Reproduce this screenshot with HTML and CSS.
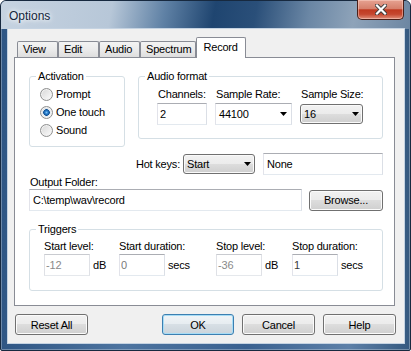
FILE: index.html
```html
<!DOCTYPE html>
<html lang="en">
<head>
    <meta charset="UTF-8">
    <title>Options</title>

    <link rel="stylesheet" href="styles.css">
</head>
<body>

    <div class="window">
        <div class="titlebar">
            <span class="title">Options</span>
            <div class="close">
                <svg width="12" height="11" viewBox="0 0 12 11">
                    <path d="M2 1.5L10 9.5M10 1.5L2 9.5" stroke="#3b3b3b" stroke-width="4" stroke-linecap="square"/>
                    <path d="M2 1.5L10 9.5M10 1.5L2 9.5" stroke="#fff" stroke-width="2.2" stroke-linecap="square"/>
                </svg>
            </div>
        </div>

        <div class="client">
            <div class="tabs">
                <div class="tab">View</div>
                <div class="tab">Edit</div>
                <div class="tab">Audio</div>
                <div class="tab">Spectrum</div>
                <div class="tab active">Record</div>
            </div>

            <div class="panel">
                <div class="top-row">
                    <fieldset class="group activation">
                        <legend>Activation</legend>
                        <div class="radio-row"><span class="radio"></span>Prompt</div>
                        <div class="radio-row"><span class="radio checked"></span>One touch</div>
                        <div class="radio-row"><span class="radio"></span>Sound</div>
                    </fieldset>

                    <fieldset class="group format">
                        <legend>Audio format</legend>
                        <div class="format-cols">
                            <div class="col channels">
                                <div class="caption">Channels:</div>
                                <input class="field" value="2">
                            </div>
                            <div class="col rate">
                                <div class="caption">Sample Rate:</div>
                                <div class="combo combo-edit">
                                    <span>44100</span>
                                    <svg width="7" height="4"><path d="M0 0h7L3.5 4z"/></svg>
                                </div>
                            </div>
                            <div class="col size">
                                <div class="caption">Sample Size:</div>
                                <div class="combo combo-btn">
                                    <span>16</span>
                                    <svg width="7" height="4"><path d="M0 0h7L3.5 4z"/></svg>
                                </div>
                            </div>
                        </div>
                    </fieldset>
                </div>

                <div class="hotkeys">
                    <span class="hotkeys-label">Hot keys:</span>
                    <div class="combo combo-btn hotkey-combo">
                        <span>Start</span>
                        <svg width="7" height="4"><path d="M0 0h7L3.5 4z"/></svg>
                    </div>
                    <input class="field hotkey-value" value="None">
                </div>

                <div class="caption">Output Folder:</div>
                <div class="folder-row">
                    <input class="field path" value="C:\temp\wav\record">
                    <div class="btn browse">Browse...</div>
                </div>

                <fieldset class="group triggers">
                    <legend>Triggers</legend>
                    <div class="trigger-grid">
                        <div class="trig">
                            <div class="caption">Start level:</div>
                            <div class="trig-input">
                                <input class="field small" value="-12" disabled><span>dB</span>
                            </div>
                        </div>
                        <div class="trig">
                            <div class="caption">Start duration:</div>
                            <div class="trig-input">
                                <input class="field small" value="0"><span>secs</span>
                            </div>
                        </div>
                        <div class="trig">
                            <div class="caption">Stop level:</div>
                            <div class="trig-input">
                                <input class="field small" value="-36" disabled><span>dB</span>
                            </div>
                        </div>
                        <div class="trig">
                            <div class="caption">Stop duration:</div>
                            <div class="trig-input">
                                <input class="field small dark" value="1"><span>secs</span>
                            </div>
                        </div>
                    </div>
                </fieldset>
            </div>

            <div class="buttons">
                <div class="btn">Reset All</div>
                <div class="btn default ok">OK</div>
                <div class="btn">Cancel</div>
                <div class="btn">Help</div>
            </div>
        </div>
    </div>

</body>
</html>
```

FILE: styles.css
```css
* {
    margin: 0;
    padding: 0;
    box-sizing: border-box;
}

body {
    width: 411px;
    height: 351px;
    font-family: "Liberation Sans", Arial, sans-serif;
    font-size: 11px;
    letter-spacing: -0.2px;
    color: #000;
    background: #fff;
    white-space: nowrap;
}

/* window frame */
.window {
    width: 411px;
    height: 351px;
    padding: 0 6px 7px 7px;
    border: 1px solid #17293f;
    border-radius: 6px 6px 2px 2px;
    background: linear-gradient(to right, #2f5684, #4d74a0 30%, #3a6190 60%, #5d80a8 85%, #35597f);
    box-shadow: inset 0 0 0 1px rgba(255, 255, 255, 0.3);
    display: flex;
    flex-direction: column;
}

.titlebar {
    height: 28px;
    margin: 0 -6px 0 -7px;
    padding: 0 6px 0 7px;
    display: flex;
    justify-content: space-between;
    align-items: flex-start;
    border-radius: 5px 5px 0 0;
    background: linear-gradient(100deg, #c6d3e1 0%, #b7c7d8 27%, #5f81a5 40%, #1f4570 52%, #2a4f79 62%, #6b87a5 75%, #8ea3b9 86%, #6c86a2 100%);
}

.title {
    margin: 8px 0 0 1px;
    font-size: 12px;
    line-height: 14px;
    letter-spacing: 0;
    color: #15253a;
    text-shadow: 0 0 4px #fff, 0 0 7px #fff;
}

.close {
    width: 47px;
    height: 20px;
    margin-top: -1px;
    border: 1px solid #4b2019;
    border-top: none;
    border-radius: 0 0 5px 5px;
    background: linear-gradient(#e6a291, #d6806c 45%, #c03a21 52%, #c5472f 75%, #e08f7a);
    box-shadow: inset 0 0 0 1px rgba(255, 220, 210, 0.45);
    display: flex;
    justify-content: center;
    align-items: center;
}

.client {
    height: 314px;
    background: #f0f0f0;
    box-shadow: 0 0 0 1px #c5d3e2;
    display: flex;
    flex-direction: column;
}

/* tabs */
.tabs {
    height: 20px;
    margin: 8px 9px 0 6px;
    padding-left: 3px;
    display: flex;
    align-items: flex-end;
}

.tab {
    height: 16px;
    min-width: 41px;
    padding: 0 4px 0 5px;
    border: 1px solid #898c95;
    border-bottom: none;
    border-radius: 2px 2px 0 0;
    background: linear-gradient(#f3f3f3, #ebebeb 50%, #dedede);
    line-height: 15px;
}

.tab.active {
    height: 21px;
    min-width: 50px;
    padding: 0 6px;
    margin-bottom: -1px;
    background: #fff;
    line-height: 19px;
    position: relative;
    z-index: 1;
}

.panel {
    margin: 0 9px 0 6px;
    padding: 11px 11px 14px 14px;
    border: 1px solid #898c95;
    background: #fff;
}

/* group boxes */
.group {
    border: 1px solid #d5dfe5;
    border-radius: 3px;
    min-width: 0;
    padding: 0 6px;
}

.group legend {
    padding: 0 2px;
    line-height: 14px;
}

.top-row {
    display: flex;
    align-items: flex-start;
    gap: 13px;
}

.activation {
    width: 96px;
    padding: 2px 6px 7px 6px;
}

.radio-row {
    height: 18px;
    display: flex;
    align-items: center;
}

.radio {
    width: 13px;
    height: 13px;
    margin: 0 3px 0 4px;
    border: 1px solid #8e8f8f;
    border-radius: 50%;
    background: linear-gradient(135deg, #d6d6d6, #fdfdfd);
    box-shadow: inset 0 0 0 1px #f2f2f2;
}

.radio.checked {
    background: radial-gradient(circle, #7cc4f4 0, #2a7fcf 1.5px, #0f4f91 3px, #d9e6f2 3.6px, transparent 4.5px), linear-gradient(135deg, #d6d6d6, #fdfdfd);
}

.format {
    flex: 1;
    padding: 4px 6px 13px 6px;
}

.format-cols {
    margin-left: 12px;
    display: flex;
    gap: 8px;
}

.col {
    display: flex;
    flex-direction: column;
    gap: 2px;
}

.channels { width: 50px; }
.rate { width: 77px; }
.size { width: 63px; }

.caption {
    line-height: 14px;
    padding-left: 1px;
}

/* inputs */
.field {
    height: 22px;
    padding: 0 2px;
    border: 1px solid;
    border-color: #abadb3 #dbdfe6 #e3e9ef #e2e3ea;
    background: #fff;
    font-family: inherit;
    font-size: 11px;
    letter-spacing: -0.2px;
    color: #000;
    outline: none;
}

.combo {
    height: 22px;
    display: flex;
    justify-content: space-between;
    align-items: center;
    padding: 0 4px 0 3px;
}

.combo-edit {
    border: 1px solid;
    border-color: #abadb3 #dbdfe6 #e3e9ef #e2e3ea;
    background: #fff;
}

.combo-btn {
    height: 20px;
    margin-top: 1px;
    padding: 0 3px 0 3px;
    border: 1px solid #707070;
    border-radius: 3px;
    background: linear-gradient(#f2f2f2, #ebebeb 50%, #dddddd 50%, #cfcfcf);
    box-shadow: inset 0 0 0 1px #fafafa;
}

.hotkeys {
    height: 22px;
    margin-top: 6px;
    display: flex;
    justify-content: flex-end;
    align-items: center;
}

.hotkeys-label {
    margin-right: 3px;
}

.hotkey-combo {
    width: 72px;
    margin: 0 8px 0 0;
}

.hotkey-value {
    width: 120px;
    padding-left: 3px;
}

.folder-row {
    display: flex;
    align-items: center;
}

.path {
    flex: 1;
    padding-left: 3px;
}

.btn {
    height: 21px;
    border: 1px solid #707070;
    border-radius: 3px;
    background: linear-gradient(#f2f2f2, #ebebeb 50%, #dddddd 50%, #cfcfcf);
    box-shadow: inset 0 0 0 1px #fbfbfb;
    display: flex;
    justify-content: center;
    align-items: center;
}

.browse {
    width: 74px;
    margin-left: 7px;
}

.triggers {
    margin-top: 11px;
    padding: 3px 6px 14px 6px;
}

.trigger-grid {
    margin-left: 8px;
    display: grid;
    grid-template-columns: 75px 97px 76px 1fr;
}

.trig .caption {
    padding-left: 0;
    margin-bottom: 1px;
}

.trig-input {
    display: flex;
    align-items: center;
}

.field.small {
    width: 46px;
    padding: 0 1px;
    color: #7a7a7a;
}

.field.small:disabled {
    border-color: #c9cbd0 #dfe1e6 #e5e8ec #dfe1e6;
    background: #fff;
    color: #8a8a8a;
}

.field.dark {
    color: #3a3a3a;
}

.trig-input span {
    margin-left: 3px;
}

/* dialog buttons */
.buttons {
    margin-top: 8px;
    padding: 0 8px 0 7px;
    display: flex;
    gap: 8px;
}

.buttons .btn {
    width: 73px;
}

.buttons .ok {
    margin-left: auto;
    width: 72px;
}

.btn.default {
    border-color: #3c7fb1;
    box-shadow: inset 0 0 0 1px #a7dcf5;
    background: linear-gradient(#f0f4f7, #e6ecf0 50%, #d7dfe5 50%, #cbd4db);
}
```
